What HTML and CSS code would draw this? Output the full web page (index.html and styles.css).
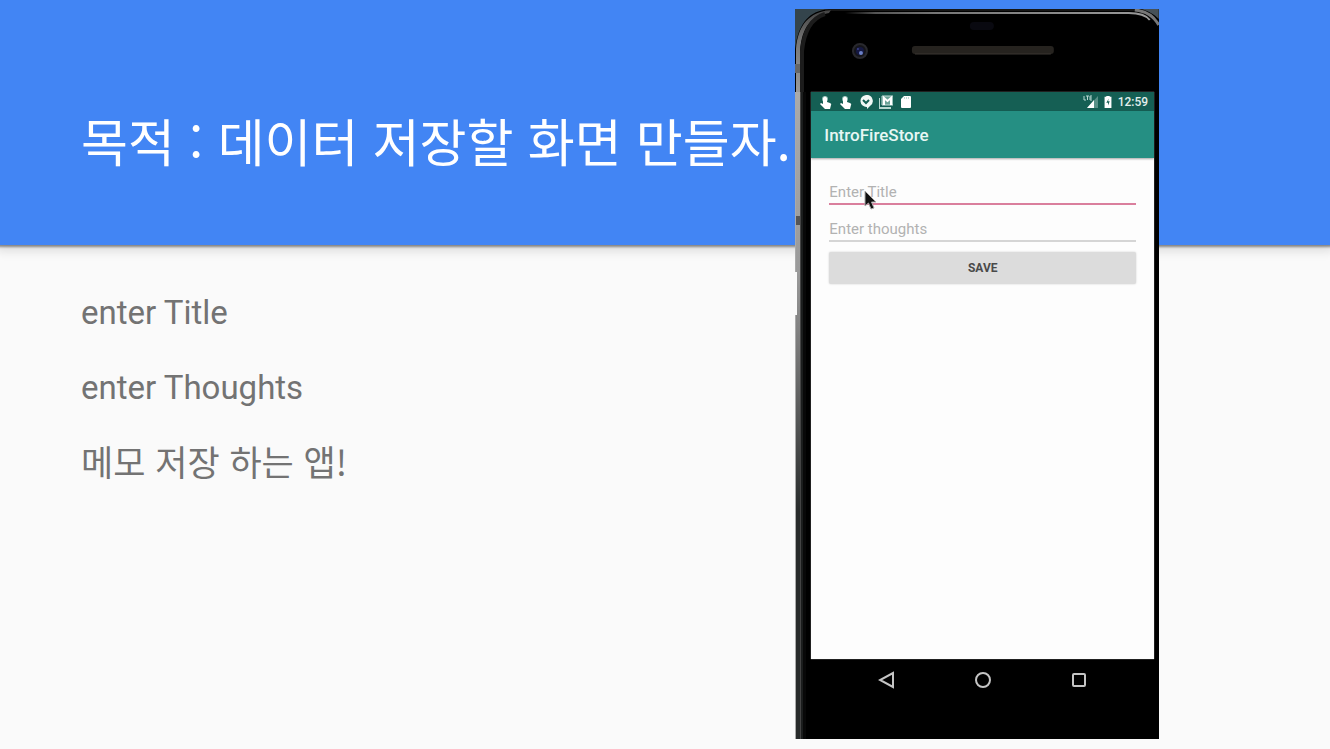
FILE: index.html
```html
<!DOCTYPE html>
<html lang="ko">
<head>
<meta charset="utf-8">
<title>IntroFireStore</title>
<link rel="stylesheet" href="styles.css">
</head>
<body>
<main class="slide">
  <header class="banner">
    <h1 class="banner-title">목적 : 데이터 저장할 화면 만들자.</h1>
  </header>
  <section class="notes">
    <p class="note">enter Title</p>
    <p class="note">enter Thoughts</p>
    <p class="note note-ko">메모 저장 하는 앱!</p>
  </section>

  <section class="phone" aria-label="IntroFireStore">
    <div class="phone-top">
      <svg class="shell" viewBox="0 0 364 83" preserveAspectRatio="none" aria-hidden="true">
        <defs>
          <linearGradient id="rim" gradientUnits="userSpaceOnUse" x1="50" y1="0" x2="355" y2="0">
            <stop offset="0" stop-color="#000"/><stop offset=".1" stop-color="#555"/>
            <stop offset=".3" stop-color="#777"/><stop offset="1" stop-color="#999"/>
          </linearGradient>
          <linearGradient id="side" x1="0" y1="0" x2="0" y2="1">
            <stop offset="0" stop-color="#444"/><stop offset=".4" stop-color="#777"/>
            <stop offset="1" stop-color="#9a9a9a"/>
          </linearGradient>
        </defs>
        <path d="M0 0H34C14 2 5 14 1 34L0 40Z" fill="#34444c"/>
        <path d="M1 83V40C3 16 14 3 36 1L34 4C16 7 7 18 5 42V83Z" fill="url(#side)"/>
        <path d="M7 83V42C9 22 17 9 30 5" fill="none" stroke="#1c1c1c" stroke-width="4"/>
        <path d="M30 1H340" stroke="#2c2c2c" stroke-width="1"/>
        <path d="M50 4H334C344 4 352 7 355 11" fill="none" stroke="url(#rim)" stroke-width="2"/>
        <path d="M346 0H364V10C359 5 354 2 346 0Z" fill="#465158"/>
        <path d="M340 1C352 2 359 7 364 16" fill="none" stroke="#777" stroke-width="3"/>
        <rect x="0" y="55" width="5" height="9" fill="#666"/>
        <rect x="175" y="13" width="24" height="8" rx="4" fill="#090910"/>
        <circle cx="65" cy="42" r="7" fill="#15151a" stroke="#28282d" stroke-width="2"/>
        <circle cx="65" cy="42" r="4" fill="#151842"/>
        <circle cx="66" cy="44" r="2" fill="#6c80c6"/>
        <circle cx="63" cy="40" r="1" fill="#3b438a"/>
        <rect x="117" y="37" width="142" height="8" rx="3" fill="#26231f"/>
        <path d="M120 45H256" stroke="#3b3732" stroke-width="1"/>
      </svg>
    </div>
    <div class="phone-middle">
      <div class="screen">
        <div class="statusbar">
          <svg class="status-icon" viewBox="0 0 14 14" aria-hidden="true"><circle cx="6" cy="4" r="3" fill="#8fbdb4"/><path d="M4 3Q6 0 8 3V7L11 8Q13 9 12 10L11 14H6L1 9L2 8L4 9Z" fill="#fff"/></svg>
          <svg class="status-icon" viewBox="0 0 14 14" aria-hidden="true"><circle cx="6" cy="4" r="3" fill="#8fbdb4"/><path d="M4 3Q6 0 8 3V7L11 8Q13 9 12 10L11 14H6L1 9L2 8L4 9Z" fill="#fff"/></svg>
          <svg class="status-icon" viewBox="0 0 14 14" aria-hidden="true"><path d="M7 0A6 6 0 0 1 11 11L8 14V12A6 6 0 1 1 7 0Z" fill="#f1f8f6"/><path d="M4 5L7 8L10 5" fill="none" stroke="#155f54" stroke-width="2"/></svg>
          <svg class="status-icon" viewBox="0 0 14 14" aria-hidden="true"><path d="M0 3V13H12" fill="none" stroke="#b8d8d1" stroke-width="2"/><path d="M3 1H14V10H3Z" fill="#6ba297" stroke="#c5ded9"/><path d="M5 10V3L8.500 6L12 3V10" fill="none" stroke="#fff" stroke-width="2"/></svg>
          <svg class="status-icon" viewBox="0 0 14 14" aria-hidden="true"><path d="M5 1H11Q12 1 12 2V12Q12 13 11 13H3Q2 13 2 12V4Z" fill="#fff"/><path d="M5.500 2V4M7.500 2V4M9.500 2V4" stroke="#c0dad5"/></svg>
          <span class="status-space"></span>
          <svg class="signal" viewBox="0 0 15 14" aria-hidden="true"><path d="M1 1V5H3M3 1H6M4.500 1V5M9 1H7V5H9M7 3H9" fill="none" stroke="#b8d8d1"/><path d="M15 1V13H4Z" fill="#599188"/><path d="M11 5V13H4Z" fill="#fff"/></svg>
          <svg class="battery" viewBox="0 0 8 14" aria-hidden="true"><path d="M2 0H6V1H8V14H0V1H2Z" fill="#fff"/><path d="M5 3L2 8H4V11L6 6H4Z" fill="#155f54"/></svg>
          <time class="clock">12:59</time>
        </div>
        <div class="toolbar">IntroFireStore</div>
        <form class="form">
          <input class="field field-active" type="text" placeholder="Enter Title" aria-label="Enter Title">
          <input class="field" type="text" placeholder="Enter thoughts" aria-label="Enter thoughts">
          <button class="save" type="button">SAVE</button>
        </form>
        <svg class="pointer" viewBox="0 0 12 20" aria-hidden="true"><path d="M1 1V16L4.500 13L7 19L10 18L7.500 12H12Z" fill="#111" stroke="#aaa" stroke-width="1"/></svg>
      </div>
    </div>
    <nav class="navbar">
      <button class="nav-button" type="button" aria-label="Back"><svg viewBox="0 0 18 18" aria-hidden="true"><path d="M15 2V16L2 9Z"/></svg></button>
      <button class="nav-button" type="button" aria-label="Home"><svg viewBox="0 0 18 18" aria-hidden="true"><circle cx="9" cy="9" r="7"/></svg></button>
      <button class="nav-button" type="button" aria-label="Recents"><svg viewBox="0 0 18 18" aria-hidden="true"><rect x="3" y="3" width="12" height="12" rx="1"/></svg></button>
    </nav>
  </section>
</main>
</body>
</html>
```

FILE: styles.css
```css
* {
  box-sizing: border-box;
}

body {
  margin: 0;
  background: #fafafa;
  font-family: Roboto, "Noto Sans CJK KR", sans-serif;
}

.slide {
  position: relative;
  min-height: 100vh;
  overflow-x: clip;
}

.banner {
  padding: 102px 81px 67px;
  background: #4285f4;
  box-shadow: 0 0 2px 2px rgba(0, 0, 0, 0.4), 0 2px 10px 4px rgba(0, 0, 0, 0.12);
}

.banner-title {
  margin: 0;
  color: #fff;
  font: 400 51px/76px "Noto Sans CJK KR", sans-serif;
  white-space: nowrap;
}

.notes {
  display: flex;
  flex-direction: column;
  gap: 27px;
  padding: 44px 81px;
}

.note {
  margin: 0;
  color: #737373;
  font-size: 33px;
  line-height: 48px;
}

.note-ko {
  font-family: "Noto Sans CJK KR", sans-serif;
  font-size: 35px;
  line-height: 44px;
}

.phone {
  position: absolute;
  top: 9px;
  bottom: 10px;
  left: 59.8%;
  width: 27.35%;
  display: flex;
  flex-direction: column;
  background: linear-gradient(to right, #aaa 0 1px, #272a2a 1px 5px, #444 5px 6px, #1b1d1d 6px 8px, #080808 8px 11px, #000 11px);
}

.phone-top {
  height: 83px;
  background: #000;
}

.shell {
  display: block;
  width: 100%;
  height: 100%;
}

.phone-middle {
  flex: 1;
  display: flex;
  padding: 0 5px 0 16px;
  background:
    linear-gradient(#555, #555) 1px 124px / 4px 9px no-repeat,
    linear-gradient(#fafafa, #fafafa) 0 180px / 2px 43px no-repeat,
    linear-gradient(#aaa, #aaa) 0 0 / 1px 100% no-repeat,
    linear-gradient(to bottom, #aaa 0, #9a9a9a 180px, #777 260px, #272a2a 420px) 1px 0 / 4px 100% no-repeat,
    linear-gradient(to right, #444 0 6px, #1b1d1d 6px 8px, #080808 8px 11px, #000 11px);
}

.screen {
  position: relative;
  flex: 1;
  min-width: 0;
  background: #fdfdfd;
  box-shadow: 0 0 1px #bbb;
}

.statusbar {
  display: flex;
  align-items: center;
  gap: 6px;
  height: 19px;
  padding: 1px 6px 0 8px;
  background: #155f54;
}

.status-icon {
  width: 14px;
  height: 14px;
}

.status-space {
  flex: 1;
}

.signal {
  width: 15px;
  height: 14px;
}

.battery {
  width: 8px;
  height: 12px;
}

.clock {
  color: #e2efec;
  font-size: 12px;
  font-weight: 500;
  line-height: 18px;
}

.toolbar {
  padding: 1px 13px 0;
  background: #258f83;
  box-shadow: 0 1px 2px rgba(0, 0, 0, 0.35);
  color: #e8f7f4;
  font-size: 17px;
  font-weight: 500;
  line-height: 46px;
}

.form {
  display: flex;
  flex-direction: column;
  gap: 10px;
  padding: 20px 18px;
}

.field {
  width: 100%;
  height: 27px;
  padding: 3px 0 0;
  border: 0;
  border-bottom: 2px solid #d5d5d5;
  background: transparent;
  color: #444;
  font: 15px/22px Roboto, sans-serif;
}

.field-active {
  border-color: #da7f9d;
}

.field::placeholder {
  color: #b2b2b2;
  opacity: 1;
}

.save {
  height: 32px;
  padding: 0;
  border: 0;
  border-radius: 2px;
  background: #dcdcdc;
  box-shadow: 0 0 2px #ccc;
  color: #4a4a4a;
  font: 700 12px/32px Roboto, sans-serif;
}

.pointer {
  position: absolute;
  top: 98px;
  left: 53px;
  width: 12px;
  height: 20px;
}

.navbar {
  display: flex;
  justify-content: center;
  gap: 78px;
  height: 80px;
  padding: 12px 5px 0 16px;
}

.nav-button {
  width: 18px;
  height: 18px;
  padding: 0;
  border: 0;
  background: transparent;
}

.nav-button svg {
  display: block;
  width: 18px;
  height: 18px;
  fill: none;
  stroke: #c4c4c4;
  stroke-width: 2;
}
```
